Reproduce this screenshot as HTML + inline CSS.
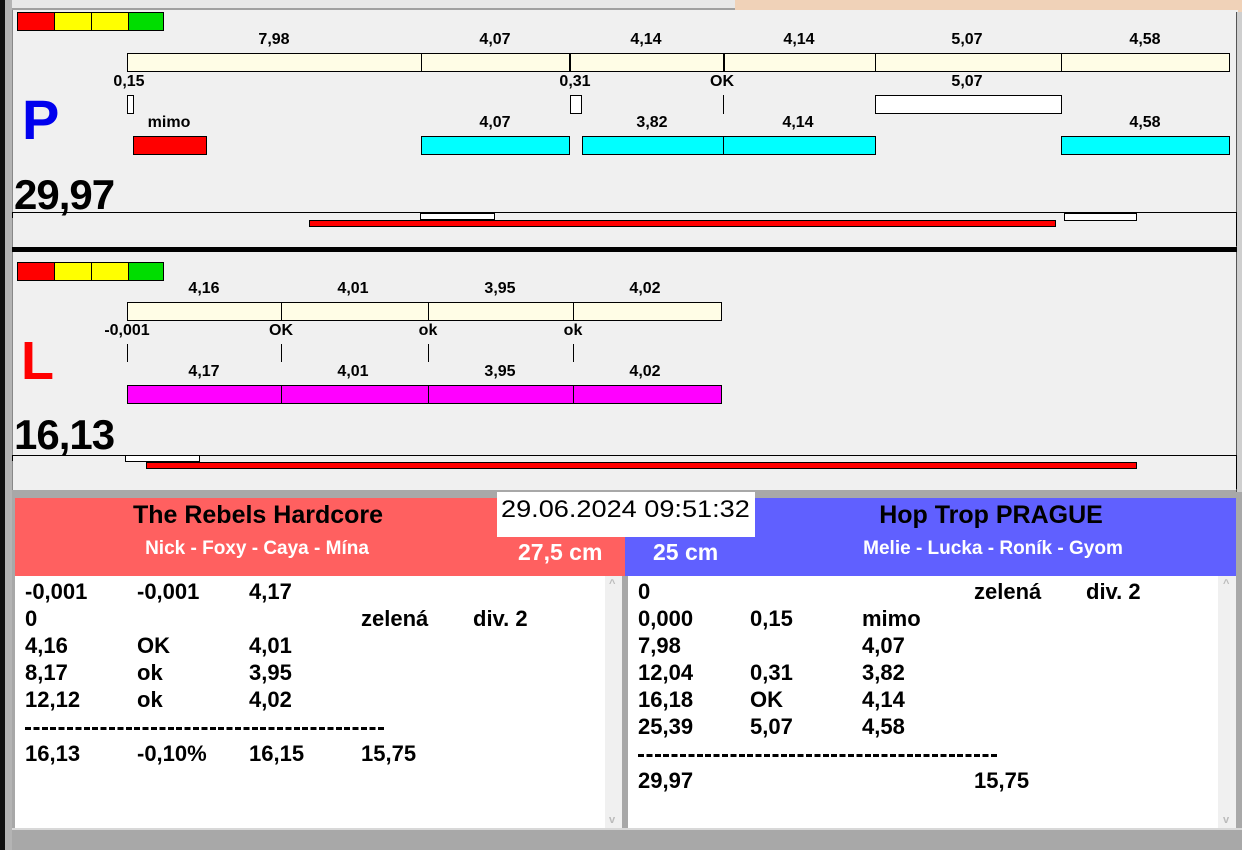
<!DOCTYPE html>
<html><head><meta charset="utf-8"><style>
*{margin:0;padding:0;box-sizing:border-box}
body{width:1242px;height:850px;overflow:hidden;background:#a8a8a8;position:relative;font-family:"Liberation Sans",sans-serif;font-weight:bold}
div{position:absolute}
.b{border:1px solid #000}
.t{font-size:16px;color:#000;transform:translateX(-50%);white-space:nowrap;line-height:18px}
.v{width:1px;background:#000}
.row{font-size:22px;line-height:27px;white-space:nowrap}
</style></head><body>
<div style="left:0;top:0;width:5px;height:850px;background:#111"></div>
<div style="left:5px;top:0;width:7px;height:850px;background:#b4b4b4"></div>
<div style="left:12px;top:0;width:723px;height:10px;background:#e8e8e8;border-bottom:2px solid #a0a0a0"></div>
<div style="left:735px;top:0;width:507px;height:12px;background:#f0d2b8"></div>
<div style="left:12px;top:10px;width:1226px;height:238px;background:#f0f0f0;border-left:1px solid #888"></div>
<div style="left:1236px;top:12px;width:6px;height:480px;background:#cfcfcf;border-left:1px solid #555"></div>
<div class="b" style="left:17px;top:12px;width:38px;height:19px;background:#f00"></div>
<div class="b" style="left:54px;top:12px;width:38px;height:19px;background:#ff0"></div>
<div class="b" style="left:91px;top:12px;width:38px;height:19px;background:#ff0"></div>
<div class="b" style="left:128px;top:12px;width:36px;height:19px;background:#0d0"></div>

<div class="t" style="left:274px;top:31px">7,98</div>
<div class="t" style="left:495px;top:31px">4,07</div>
<div class="t" style="left:646px;top:31px">4,14</div>
<div class="t" style="left:799px;top:31px">4,14</div>
<div class="t" style="left:967px;top:31px">5,07</div>
<div class="t" style="left:1145px;top:31px">4,58</div>
<div class="b" style="left:127px;top:53px;width:1103px;height:19px;background:#fffde6"></div>
<div class="v" style="left:421px;top:53px;height:19px"></div>
<div class="v" style="left:569px;top:53px;height:19px;width:2px"></div>
<div class="v" style="left:723px;top:53px;height:19px;width:2px"></div>
<div class="v" style="left:875px;top:53px;height:19px"></div>
<div class="v" style="left:1061px;top:53px;height:19px"></div>

<div class="t" style="left:129px;top:73px">0,15</div>
<div class="t" style="left:575px;top:73px">0,31</div>
<div class="t" style="left:722px;top:73px">OK</div>
<div class="t" style="left:967px;top:73px">5,07</div>
<div class="b" style="left:127px;top:95px;width:7px;height:19px;background:#fff"></div>
<div class="b" style="left:570px;top:95px;width:12px;height:19px;background:#fff"></div>
<div class="v" style="left:723px;top:95px;height:19px"></div>
<div class="b" style="left:875px;top:95px;width:187px;height:19px;background:#fff"></div>

<div style="left:22px;top:88px;font-size:56px;color:#0000ee;line-height:64px">P</div>
<div class="t" style="left:169px;top:114px">mimo</div>
<div class="t" style="left:495px;top:114px">4,07</div>
<div class="t" style="left:652px;top:114px">3,82</div>
<div class="t" style="left:798px;top:114px">4,14</div>
<div class="t" style="left:1145px;top:114px">4,58</div>
<div class="b" style="left:133px;top:136px;width:74px;height:19px;background:#f00"></div>
<div class="b" style="left:421px;top:136px;width:149px;height:19px;background:#0ff"></div>
<div class="b" style="left:582px;top:136px;width:294px;height:19px;background:#0ff"></div>
<div class="v" style="left:723px;top:136px;height:19px"></div>
<div class="b" style="left:1061px;top:136px;width:169px;height:19px;background:#0ff"></div>
<div style="left:14px;top:172px;font-size:42px;line-height:46px;letter-spacing:-1px">29,97</div>
<div style="left:12px;top:212px;width:1225px;height:1px;background:#000"></div>
<div class="v" style="left:1236px;top:212px;height:34px"></div>
<div class="v" style="left:12px;top:212px;height:6px"></div>
<div class="b" style="left:420px;top:213px;width:75px;height:7px;background:#fff"></div>
<div class="b" style="left:1064px;top:213px;width:73px;height:8px;background:#fff"></div>
<div class="b" style="left:309px;top:220px;width:747px;height:7px;background:#f00"></div>
<div style="left:12px;top:247px;width:1225px;height:5px;background:#000"></div>

<div style="left:12px;top:252px;width:1224px;height:238px;background:#f0f0f0;border-left:1px solid #888"></div>
<div class="b" style="left:17px;top:262px;width:38px;height:19px;background:#f00"></div>
<div class="b" style="left:54px;top:262px;width:38px;height:19px;background:#ff0"></div>
<div class="b" style="left:91px;top:262px;width:38px;height:19px;background:#ff0"></div>
<div class="b" style="left:128px;top:262px;width:36px;height:19px;background:#0d0"></div>
<div class="t" style="left:204px;top:280px">4,16</div>
<div class="t" style="left:353px;top:280px">4,01</div>
<div class="t" style="left:500px;top:280px">3,95</div>
<div class="t" style="left:645px;top:280px">4,02</div>
<div class="b" style="left:127px;top:302px;width:595px;height:19px;background:#fffde6"></div>
<div class="v" style="left:281px;top:302px;height:19px"></div>
<div class="v" style="left:428px;top:302px;height:19px"></div>
<div class="v" style="left:573px;top:302px;height:19px"></div>
<div class="t" style="left:127px;top:322px">-0,001</div>
<div class="t" style="left:281px;top:322px">OK</div>
<div class="t" style="left:428px;top:322px">ok</div>
<div class="t" style="left:573px;top:322px">ok</div>
<div class="v" style="left:127px;top:344px;height:18px"></div>
<div class="v" style="left:281px;top:344px;height:18px"></div>
<div class="v" style="left:428px;top:344px;height:18px"></div>
<div class="v" style="left:573px;top:344px;height:18px"></div>
<div style="left:21px;top:331px;font-size:54px;color:#f00;line-height:60px">L</div>
<div class="t" style="left:204px;top:363px">4,17</div>
<div class="t" style="left:353px;top:363px">4,01</div>
<div class="t" style="left:500px;top:363px">3,95</div>
<div class="t" style="left:645px;top:363px">4,02</div>
<div class="b" style="left:127px;top:385px;width:595px;height:19px;background:#f0f"></div>
<div class="v" style="left:281px;top:385px;height:19px"></div>
<div class="v" style="left:428px;top:385px;height:19px"></div>
<div class="v" style="left:573px;top:385px;height:19px"></div>
<div style="left:14px;top:412px;font-size:42px;line-height:46px;letter-spacing:-1px">16,13</div>
<div style="left:12px;top:455px;width:1225px;height:1px;background:#000"></div>
<div class="v" style="left:1236px;top:455px;height:34px"></div>
<div class="v" style="left:12px;top:455px;height:6px"></div>
<div class="b" style="left:125px;top:455px;width:75px;height:7px;background:#fff"></div>
<div class="b" style="left:146px;top:462px;width:991px;height:7px;background:#f00"></div>

<div style="left:12px;top:490px;width:1224px;height:8px;background:#a8a8a8"></div>
<div style="left:15px;top:498px;width:610px;height:78px;background:#ff6060"></div>
<div style="left:625px;top:498px;width:611px;height:78px;background:#6060ff"></div>
<div style="left:497px;top:492px;width:258px;height:45px;background:#fff;font-weight:normal;font-size:24px;line-height:36px;padding-left:4px;white-space:nowrap"><span style="display:inline-block;transform:scaleX(1.13);transform-origin:left">29.06.2024 09:51:32</span></div>
<div style="left:258px;top:500px;transform:translateX(-50%);font-size:25px;line-height:30px;white-space:nowrap">The Rebels Hardcore</div>
<div style="left:991px;top:500px;transform:translateX(-50%);font-size:25px;line-height:30px;white-space:nowrap">Hop Trop PRAGUE</div>
<div style="left:257px;top:538px;transform:translateX(-50%);font-size:19px;color:#fff;white-space:nowrap;line-height:22px">Nick - Foxy - Caya - Mína</div>
<div style="left:993px;top:538px;transform:translateX(-50%);font-size:19px;color:#fff;white-space:nowrap;line-height:22px">Melie - Lucka - Roník - Gyom</div>
<div style="left:518px;top:539px;font-size:23px;color:#fff;line-height:26px">27,5 cm</div>
<div style="left:653px;top:539px;font-size:23px;color:#fff;line-height:26px">25 cm</div>

<div style="left:15px;top:576px;width:590px;height:252px;background:#fff"></div>
<div style="left:605px;top:576px;width:17px;height:252px;background:#f0f0f0;color:#bbb;font-size:11px;text-align:center"><span style="position:absolute;top:2px;left:4px">^</span><span style="position:absolute;bottom:2px;left:4px">v</span></div>
<div style="left:622px;top:576px;width:6px;height:252px;background:#a8a8a8"></div>
<div style="left:628px;top:576px;width:590px;height:252px;background:#fff"></div>
<div style="left:1218px;top:576px;width:18px;height:252px;background:#f0f0f0;color:#bbb;font-size:11px"><span style="position:absolute;top:2px;left:5px">^</span><span style="position:absolute;bottom:2px;left:5px">v</span></div>
<div style="left:12px;top:828px;width:1230px;height:22px;background:#a8a8a8;border-top:2px solid #d8d8d8"></div>

<div style="left:25px;top:578px" class="row">
<div style="left:0;top:0">-0,001</div><div style="left:112px;top:0">-0,001</div><div style="left:224px;top:0">4,17</div>
<div style="left:0;top:27px">0</div><div style="left:336px;top:27px">zelená</div><div style="left:448px;top:27px">div. 2</div>
<div style="left:0;top:54px">4,16</div><div style="left:112px;top:54px">OK</div><div style="left:224px;top:54px">4,01</div>
<div style="left:0;top:81px">8,17</div><div style="left:112px;top:81px">ok</div><div style="left:224px;top:81px">3,95</div>
<div style="left:0;top:108px">12,12</div><div style="left:112px;top:108px">ok</div><div style="left:224px;top:108px">4,02</div>
<div style="left:0;top:135px;width:360px;height:3px;background:repeating-linear-gradient(90deg,#000 0 6px,transparent 6px 8.4px);top:149px"></div>
<div style="left:0;top:162px">16,13</div><div style="left:112px;top:162px">-0,10%</div><div style="left:224px;top:162px">16,15</div><div style="left:336px;top:162px">15,75</div>
</div>
<div style="left:638px;top:578px" class="row">
<div style="left:0;top:0">0</div><div style="left:336px;top:0">zelená</div><div style="left:448px;top:0">div. 2</div>
<div style="left:0;top:27px">0,000</div><div style="left:112px;top:27px">0,15</div><div style="left:224px;top:27px">mimo</div>
<div style="left:0;top:54px">7,98</div><div style="left:224px;top:54px">4,07</div>
<div style="left:0;top:81px">12,04</div><div style="left:112px;top:81px">0,31</div><div style="left:224px;top:81px">3,82</div>
<div style="left:0;top:108px">16,18</div><div style="left:112px;top:108px">OK</div><div style="left:224px;top:108px">4,14</div>
<div style="left:0;top:135px">25,39</div><div style="left:112px;top:135px">5,07</div><div style="left:224px;top:135px">4,58</div>
<div style="left:0;width:360px;height:3px;background:repeating-linear-gradient(90deg,#000 0 6px,transparent 6px 8.4px);top:176px"></div>
<div style="left:0;top:189px">29,97</div><div style="left:336px;top:189px">15,75</div>
</div>
</body></html>
